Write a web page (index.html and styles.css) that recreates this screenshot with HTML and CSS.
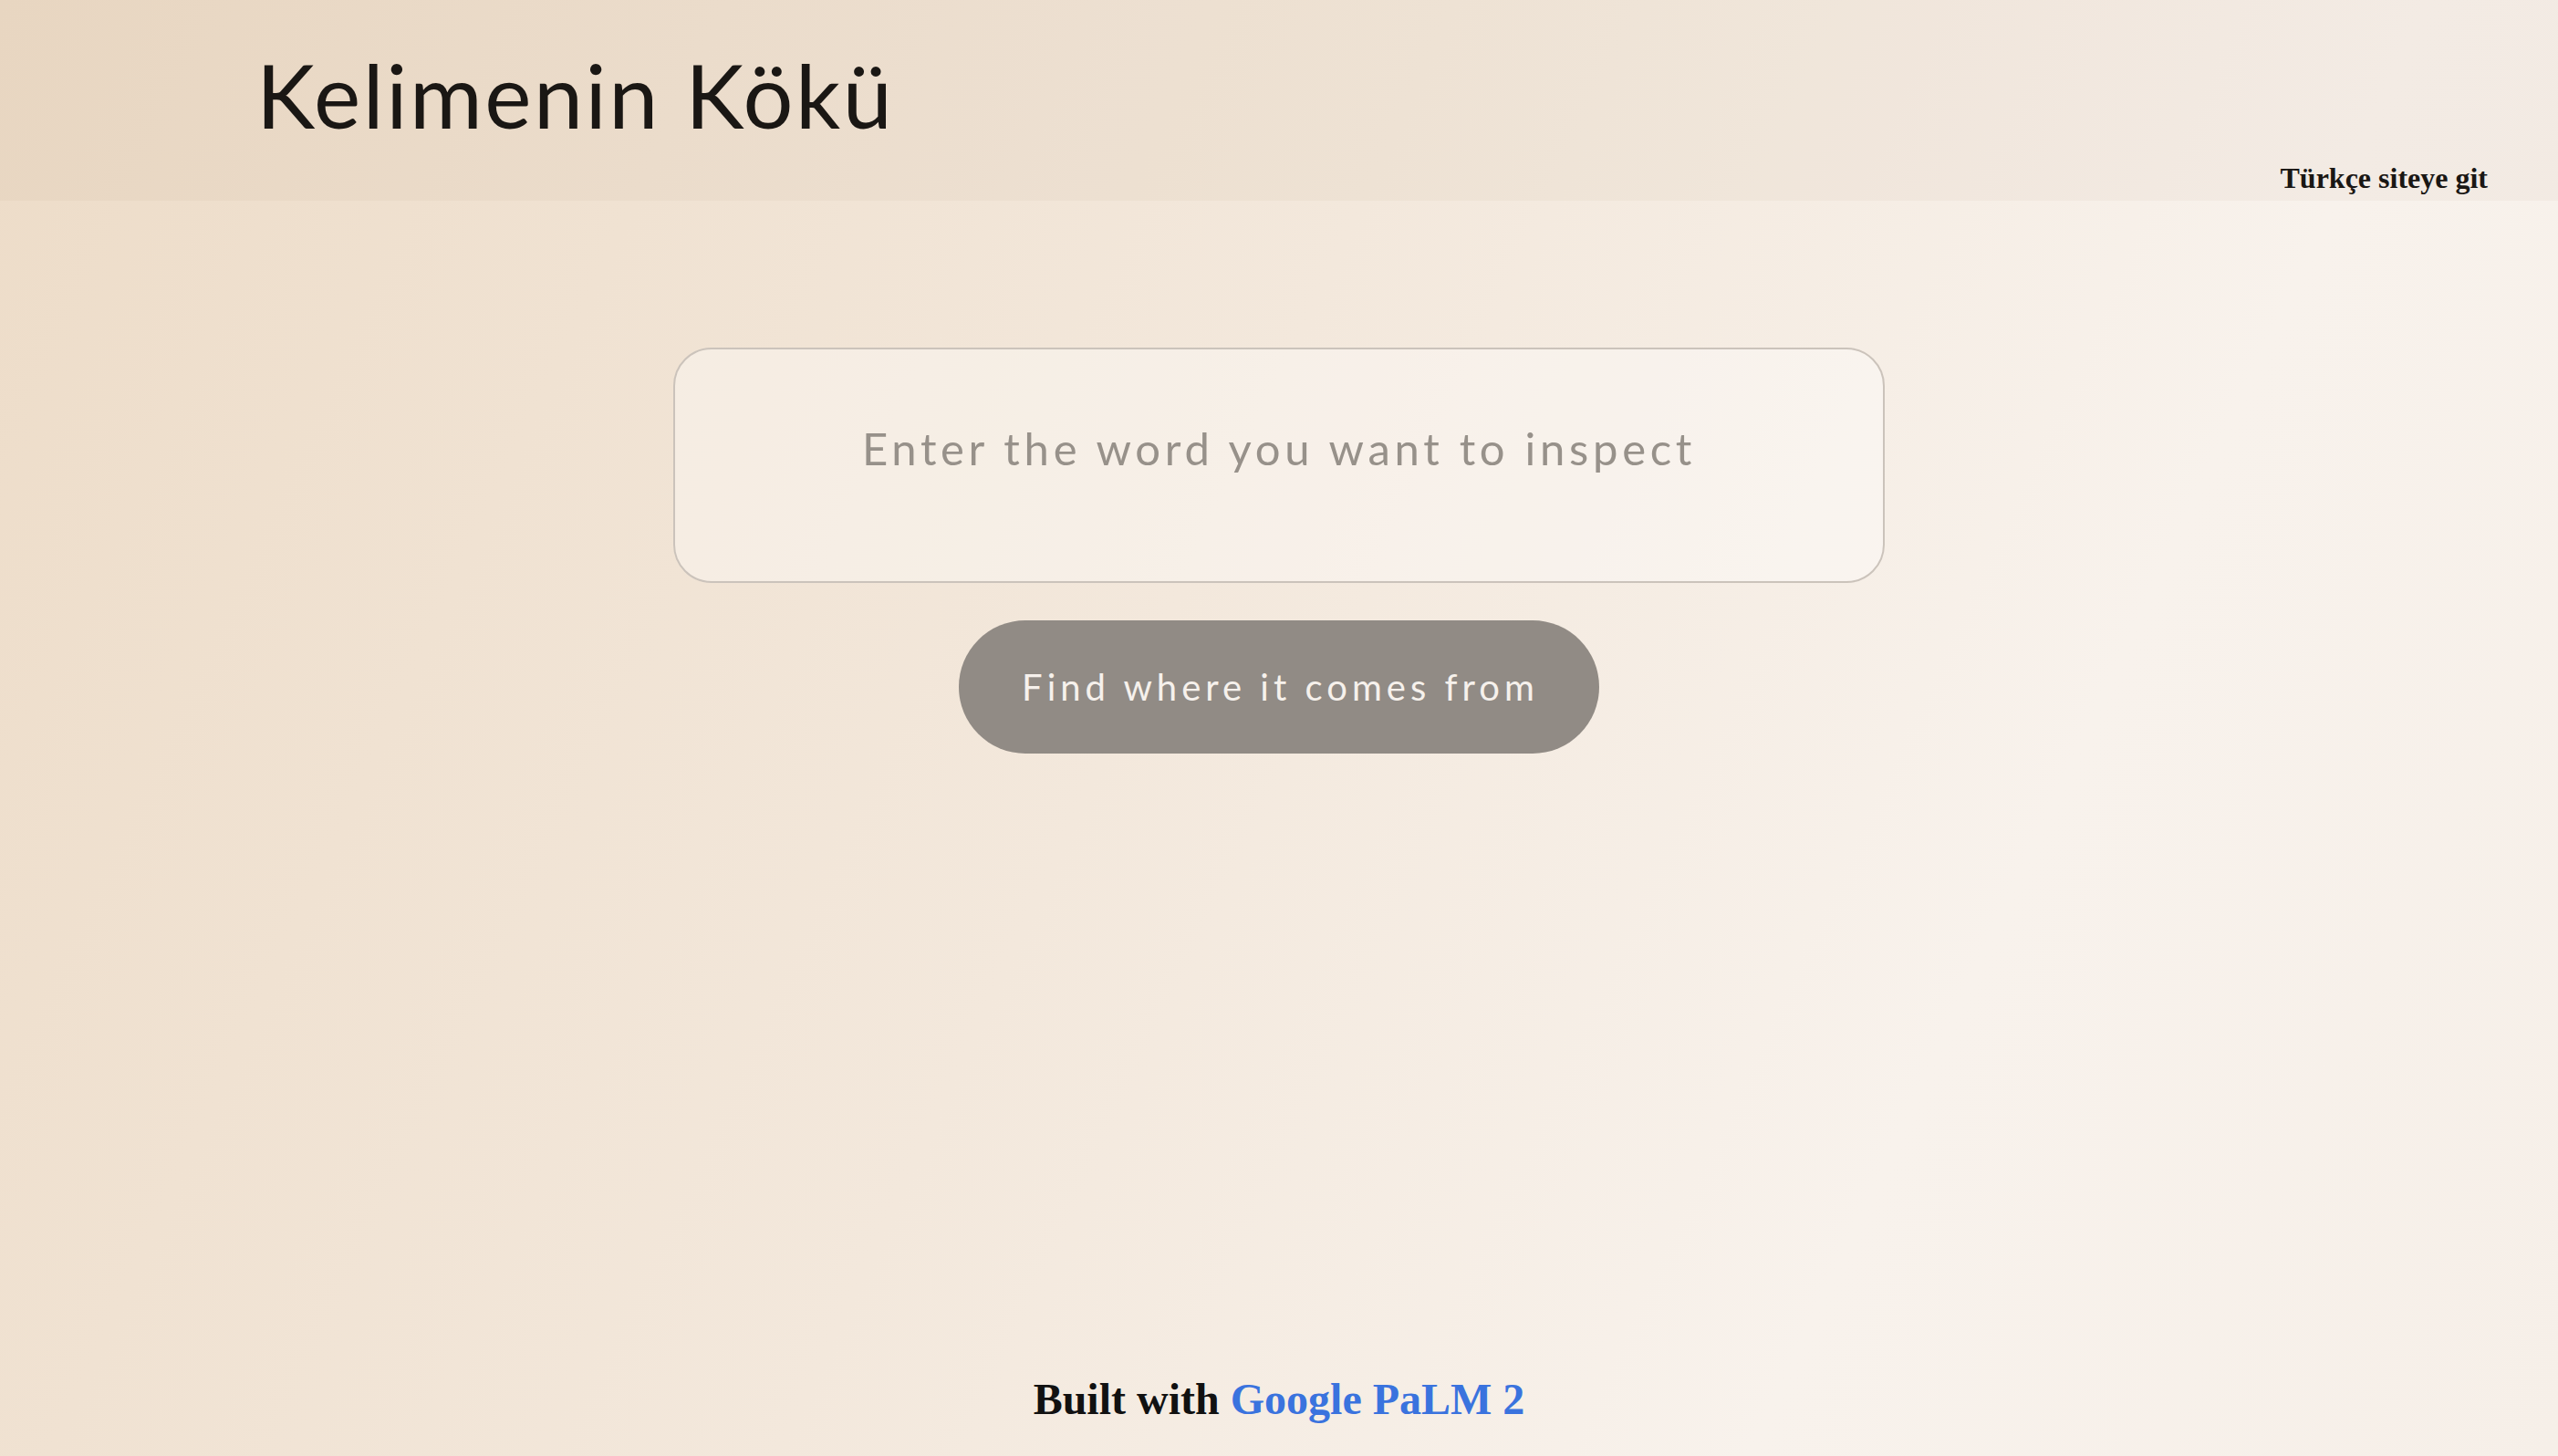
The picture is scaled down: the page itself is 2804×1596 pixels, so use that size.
FILE: index.html
```html
<!DOCTYPE html>
<html lang="en">
<head>
<meta charset="utf-8">
<title>Kelimenin Kökü</title>
<link rel="stylesheet" href="styles.css">
</head>
<body>
<div class="page">
  <header class="topbar">
    <h1 class="brand">Kelimenin Kökü</h1>
    <a class="lang-link" href="#">Türkçe siteye git</a>
  </header>
  <main class="search">
    <input class="word-input" type="text" placeholder="Enter the word you want to inspect">
    <button class="find-btn" type="button">Find where it comes from</button>
  </main>
  <footer class="credits">
    Built with <a class="palm-link" href="#">Google PaLM 2</a>
  </footer>
</div>
</body>
</html>
```
FILE: styles.css
```css
html, body {
  margin: 0;
  padding: 0;
  height: 100%;
}
body {
  background: linear-gradient(115deg, #eddcc8 0%, #f3e8dc 45%, #f8f2ec 75%, #f6efe8 100%);
  font-family: "Liberation Serif", "Times New Roman", serif;
}
.page {
  min-height: 100vh;
  display: flex;
  flex-direction: column;
}
.topbar {
  height: 220px;
  box-sizing: border-box;
  display: flex;
  justify-content: space-between;
  align-items: flex-start;
  padding: 0 77px 0 281px;
  background: rgba(150, 110, 70, 0.05);
}
.brand {
  margin: 46px 0 0 0;
  font-family: Lato, "Open Sans", sans-serif;
  font-weight: 400;
  font-size: 97px;
  line-height: 1.2;
  color: #1a1714;
  letter-spacing: 2.5px;
}
.lang-link {
  align-self: flex-end;
  margin-bottom: 6px;
  font-family: "Liberation Serif", serif;
  font-weight: 700;
  font-size: 32px;
  color: #1a1714;
  text-decoration: none;
}
.search {
  flex: 1;
  display: flex;
  flex-direction: column;
  align-items: center;
  padding-top: 161px;
  gap: 41px;
}
.word-input {
  width: 1328px;
  height: 258px;
  box-sizing: border-box;
  border: 2px solid #cbc3bb;
  border-radius: 42px;
  background: rgba(255, 255, 255, 0.35);
  text-align: center;
  font-family: Lato, "Open Sans", sans-serif;
  font-size: 49px;
  letter-spacing: 4.7px;
  color: #4a4540;
  padding: 0 40px 38px;
  outline: none;
}
.word-input::placeholder {
  color: #97918a;
}
.find-btn {
  height: 146px;
  padding: 0 66px 0 69px;
  border: none;
  border-radius: 73px;
  background: #918b85;
  color: #f6f1ec;
  font-family: Lato, "Open Sans", sans-serif;
  font-size: 40px;
  letter-spacing: 5px;
  cursor: pointer;
}
.credits {
  text-align: center;
  font-family: "Liberation Serif", serif;
  font-weight: 700;
  font-size: 48px;
  color: #111;
  padding-bottom: 35px;
}
.palm-link {
  color: #3a73de;
  text-decoration: none;
}
```
